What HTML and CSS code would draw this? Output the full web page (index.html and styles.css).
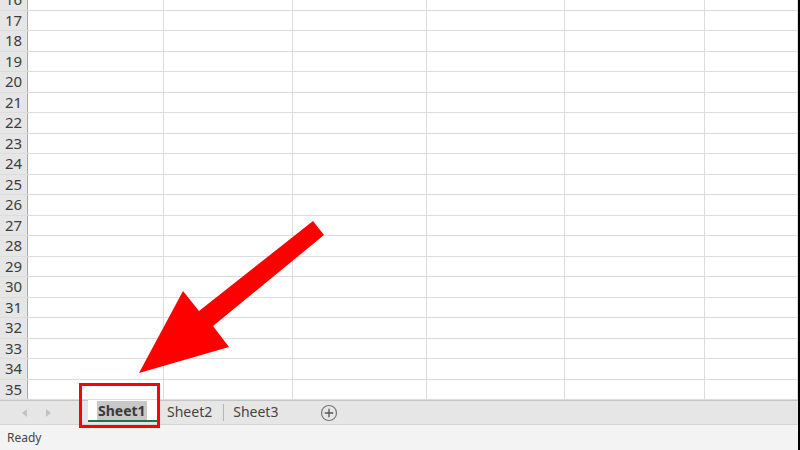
FILE: index.html
```html
<!DOCTYPE html>
<html lang="en">
<head>
    <meta charset="UTF-8">
    <title>Sheet tabs</title>
    <link rel="stylesheet" href="styles.css">
</head>
<body>
    <div class="window">
        <div class="grid">
            <div class="row"><div class="hdr">16</div><div></div><div></div><div></div><div></div><div></div><div></div></div>
            <div class="row"><div class="hdr">17</div><div></div><div></div><div></div><div></div><div></div><div></div></div>
            <div class="row"><div class="hdr">18</div><div></div><div></div><div></div><div></div><div></div><div></div></div>
            <div class="row"><div class="hdr">19</div><div></div><div></div><div></div><div></div><div></div><div></div></div>
            <div class="row"><div class="hdr">20</div><div></div><div></div><div></div><div></div><div></div><div></div></div>
            <div class="row"><div class="hdr">21</div><div></div><div></div><div></div><div></div><div></div><div></div></div>
            <div class="row"><div class="hdr">22</div><div></div><div></div><div></div><div></div><div></div><div></div></div>
            <div class="row"><div class="hdr">23</div><div></div><div></div><div></div><div></div><div></div><div></div></div>
            <div class="row"><div class="hdr">24</div><div></div><div></div><div></div><div></div><div></div><div></div></div>
            <div class="row"><div class="hdr">25</div><div></div><div></div><div></div><div></div><div></div><div></div></div>
            <div class="row"><div class="hdr">26</div><div></div><div></div><div></div><div></div><div></div><div></div></div>
            <div class="row"><div class="hdr">27</div><div></div><div></div><div></div><div></div><div></div><div></div></div>
            <div class="row"><div class="hdr">28</div><div></div><div></div><div></div><div></div><div></div><div></div></div>
            <div class="row"><div class="hdr">29</div><div></div><div></div><div></div><div></div><div></div><div></div></div>
            <div class="row"><div class="hdr">30</div><div></div><div></div><div></div><div></div><div></div><div></div></div>
            <div class="row"><div class="hdr">31</div><div></div><div></div><div></div><div></div><div></div><div></div></div>
            <div class="row"><div class="hdr">32</div><div></div><div></div><div></div><div></div><div></div><div></div></div>
            <div class="row"><div class="hdr">33</div><div></div><div></div><div></div><div></div><div></div><div></div></div>
            <div class="row"><div class="hdr">34</div><div></div><div></div><div></div><div></div><div></div><div></div></div>
            <div class="row"><div class="hdr">35</div><div></div><div></div><div></div><div></div><div></div><div></div></div>
        </div>

        <div class="tabbar">
            <div class="nav">
                <span class="tri left"></span>
                <span class="tri right"></span>
            </div>
            <div class="tab active"><span class="sel">Sheet1</span></div>
            <div class="tab">Sheet2</div>
            <div class="tab">Sheet3</div>
            <div class="add">
                <svg width="18" height="18" viewBox="0 0 18 18">
                    <circle cx="9" cy="9" r="7.5" fill="none" stroke="#777" stroke-width="1.2"/>
                    <path d="M9 4.8v8.4M4.8 9h8.4" stroke="#555" stroke-width="1.3"/>
                </svg>
            </div>
        </div>

        <div class="status">Ready</div>

        <!-- red callout over the active tab -->
        <div class="callout"></div>
        <svg class="arrow" width="800" height="450" viewBox="0 0 800 450">
            <polygon points="139,373 183,291 199,311 313,221 324,235 213,326 229,347" fill="#ff0000"/>
        </svg>
    </div>
</body>
</html>
```

FILE: styles.css
```css
* {
    box-sizing: border-box;
}
body {
    margin: 0;
    font-family: "Noto Sans", "Open Sans", sans-serif;
    background-color: #fff;
}
.window {
    position: relative;
    width: 800px;
    height: 450px;
    overflow: hidden;
    border-right: 2px solid #000;
    display: flex;
    flex-direction: column;
}
.grid {
    height: 400px;
    flex: 0 0 400px;
    overflow: hidden;
    display: flex;
    flex-direction: column;
    justify-content: flex-end;
}
.row {
    flex: 0 0 20.5px;
    min-height: 0;
    display: grid;
    grid-template-columns: 28px 136px 129px 134px 138px 140px 1fr;
    border-bottom: 1px solid #dcdcdc;
}
.row > div {
    border-right: 1px solid #dcdcdc;
    min-height: 0;
}
.row .hdr {
    background-color: #e6e6e6;
    border-right: 1px solid #ababab;
    color: #3c3c3c;
    font-size: 15px;
    line-height: 19px;
    text-align: center;
    overflow: hidden;
}
.tabbar {
    height: 24px;
    background-color: #e6e6e6;
    border-top: 1px solid #c6c6c6;
    display: flex;
    align-items: stretch;
}
.nav {
    width: 88px;
    display: flex;
    align-items: center;
    padding-left: 22px;
    gap: 19px;
}
.tri {
    width: 0;
    height: 0;
    border-top: 4px solid transparent;
    border-bottom: 4px solid transparent;
}
.tri.left {
    border-right: 5px solid #c3c3c3;
}
.tri.right {
    border-left: 5px solid #c3c3c3;
}
.tab {
    padding: 0 11px 0 10px;
    font-size: 14px;
    color: #444;
    line-height: 22px;
    position: relative;
}
.tab + .tab::before {
    content: "";
    position: absolute;
    left: 0;
    top: 3px;
    height: 17px;
    border-left: 1px solid #b5b5b5;
}
.tab:last-of-type {
    padding-right: 12px;
}
.tab:last-of-type::after {
    content: "";
    position: absolute;
    right: 0;
    top: 3px;
    height: 17px;
    border-left: 1px solid #b5b5b5;
}
.tab.active {
    width: 69px;
    margin-top: -1px;
    padding: 1px 0 0 9px;
    background-color: #fff;
    border-bottom: 2px solid #217346;
    height: 22px;
    line-height: 19px;
    font-weight: bold;
    color: #3a3a3a;
}
.tab.active + .tab::before {
    display: none;
}
.sel {
    background-color: #c8c8c8;
    padding: 0 1px;
}
.add {
    margin-left: 31px;
    display: flex;
    align-items: center;
}
.status {
    flex: 1;
    background-color: #f3f3f3;
    border-top: 1px solid #d6d6d6;
    font-size: 12px;
    color: #444;
    padding: 4px 0 0 7px;
}
.callout {
    position: absolute;
    left: 79px;
    top: 383px;
    width: 81px;
    height: 45px;
    border: 3px solid #ff0000;
}
.arrow {
    position: absolute;
    left: 0;
    top: 0;
}
```
